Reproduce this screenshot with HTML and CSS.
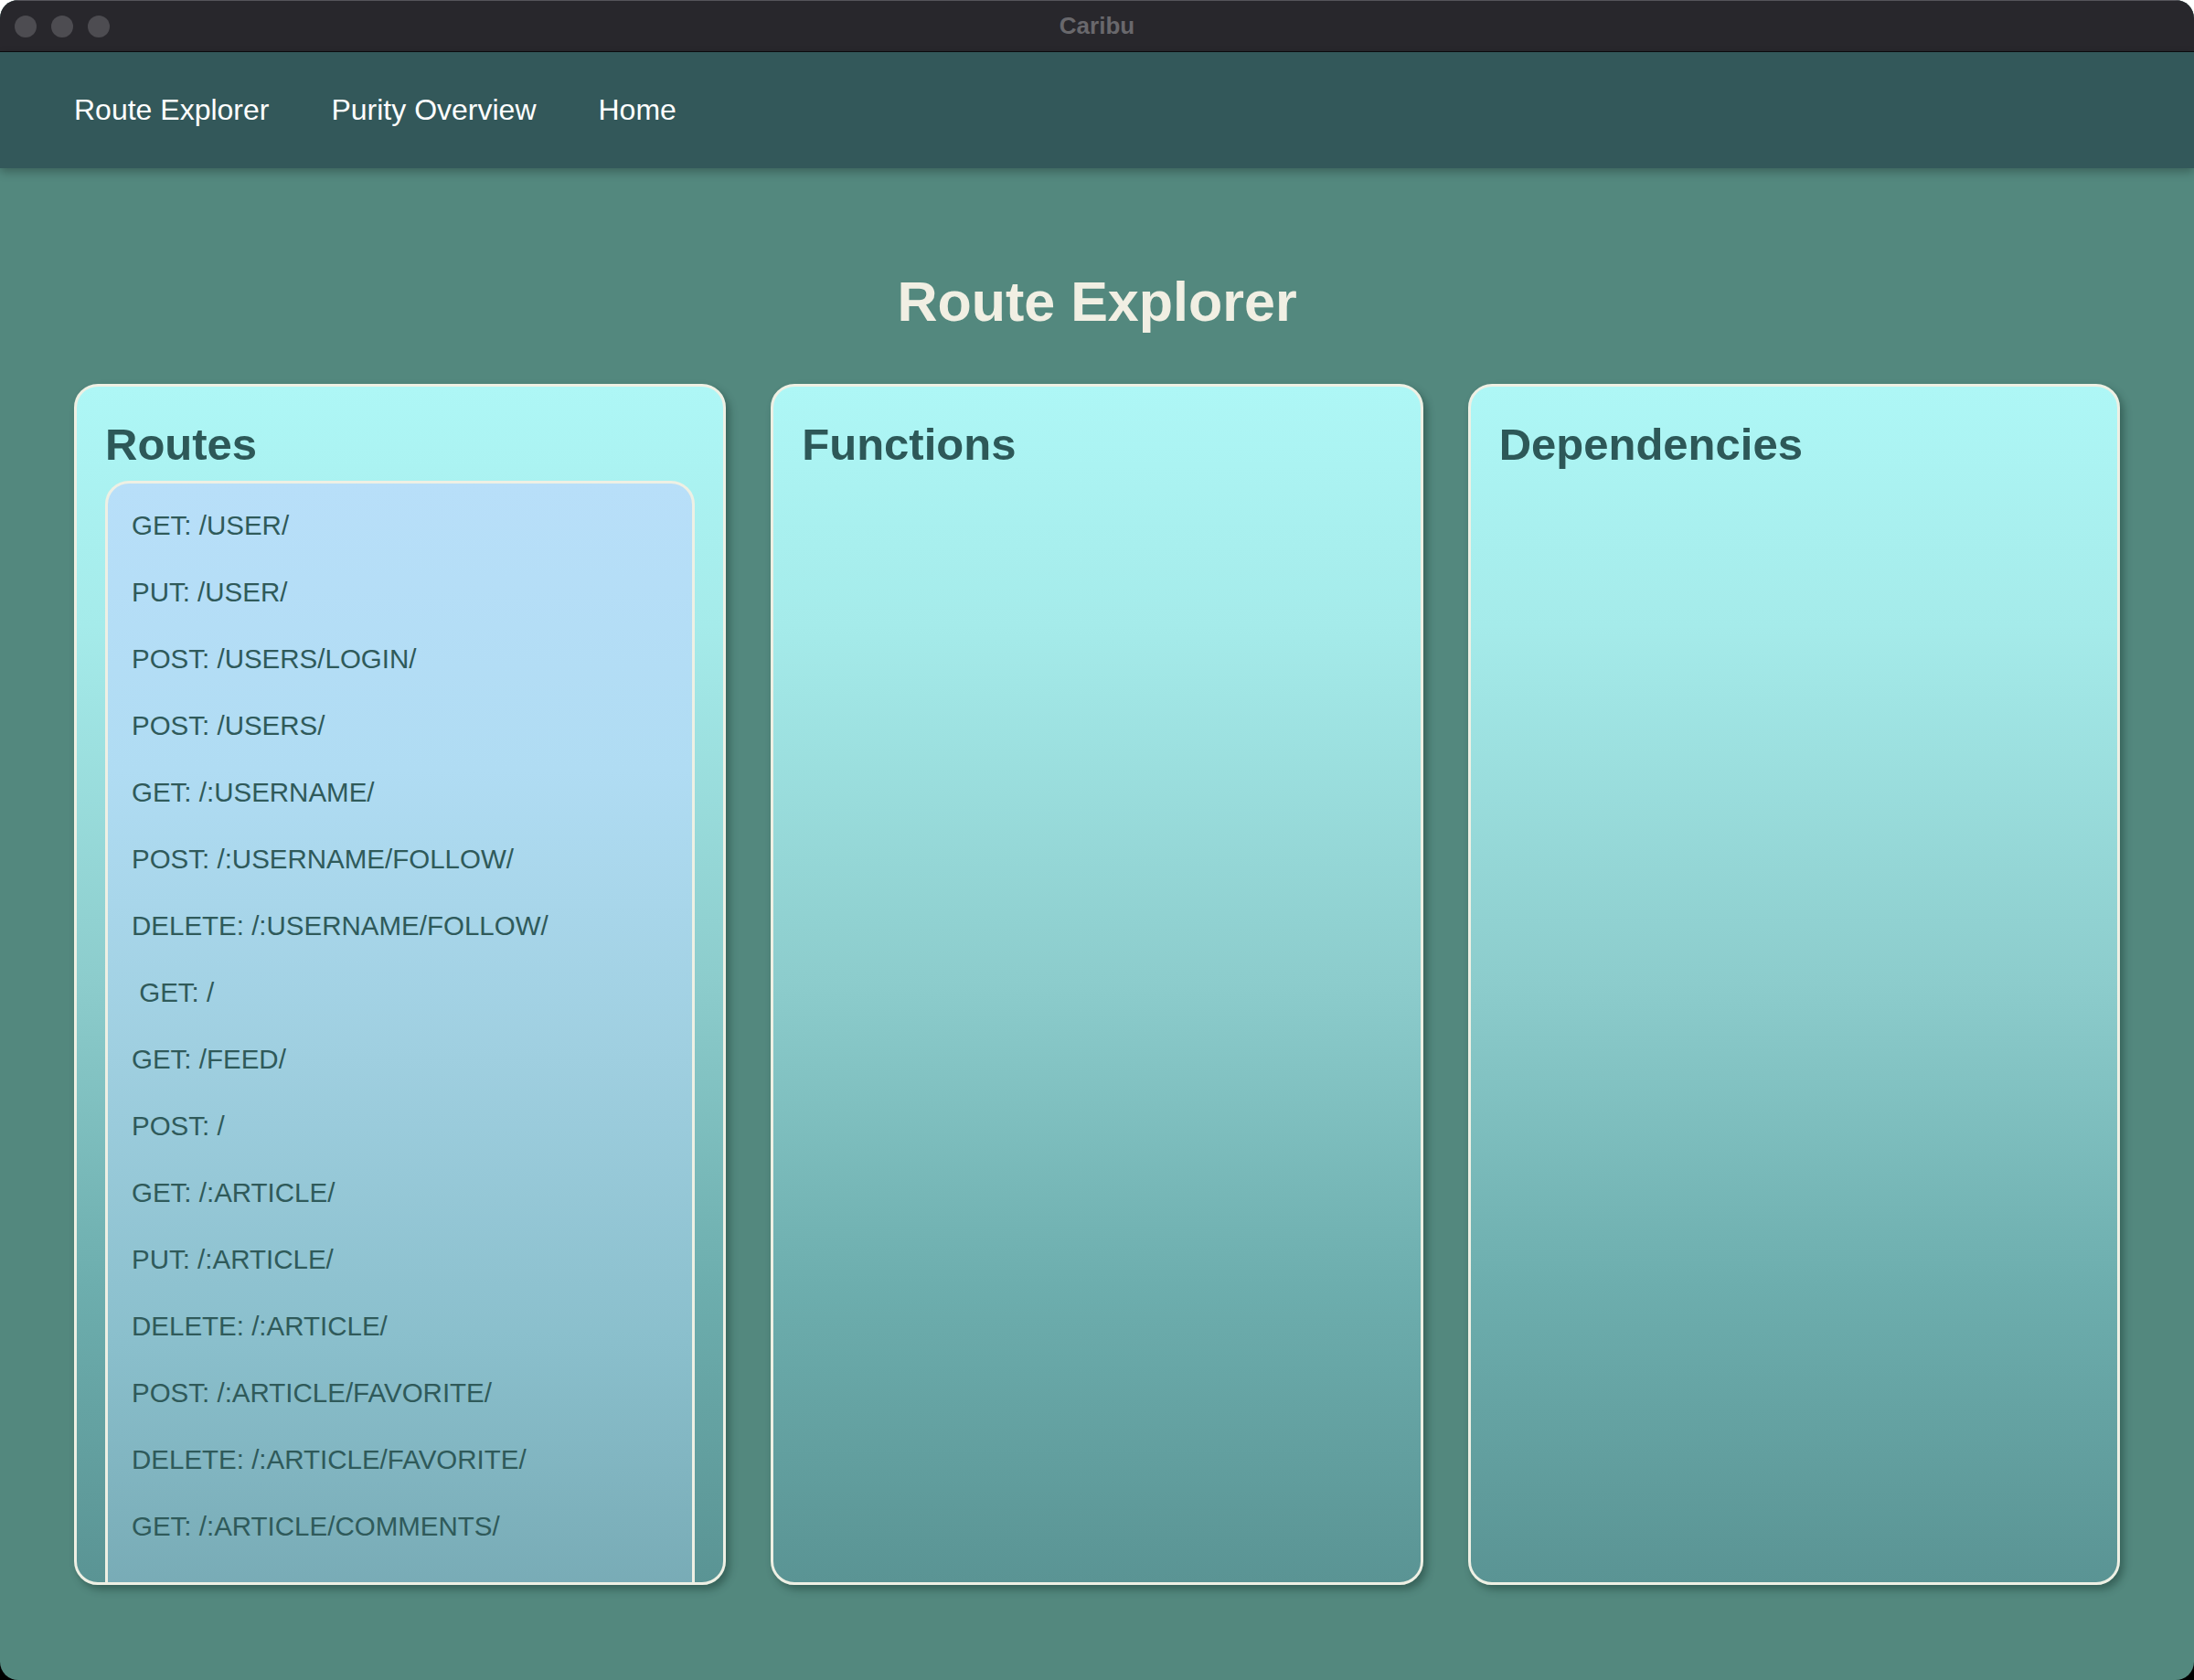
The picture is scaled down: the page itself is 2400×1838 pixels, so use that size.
FILE: index.html
```html
<!DOCTYPE html>
<html lang="en">
<head>
<meta charset="utf-8">
<title>Caribu</title>
<link rel="stylesheet" href="styles.css">
</head>
<body>
<div class="window">
  <header class="titlebar">
    <div class="lights">
      <span class="light"></span><span class="light"></span><span class="light"></span>
    </div>
    <div class="app-title">Caribu</div>
    <div></div>
  </header>
  <nav class="nav">
    <a class="nav-link" href="#">Route Explorer</a>
    <a class="nav-link" href="#">Purity Overview</a>
    <a class="nav-link" href="#">Home</a>
  </nav>
  <main class="main">
    <h1 class="page-title">Route Explorer</h1>
    <div class="cards">
      <section class="card">
        <h2 class="card-title">Routes</h2>
        <div class="route-list">
          <p class="route">GET: /user/</p>
          <p class="route">PUT: /user/</p>
          <p class="route">POST: /users/login/</p>
          <p class="route">POST: /users/</p>
          <p class="route">GET: /:username/</p>
          <p class="route">POST: /:username/follow/</p>
          <p class="route">DELETE: /:username/follow/</p>
          <p class="route"> GET: /</p>
          <p class="route">GET: /feed/</p>
          <p class="route">POST: /</p>
          <p class="route">GET: /:article/</p>
          <p class="route">PUT: /:article/</p>
          <p class="route">DELETE: /:article/</p>
          <p class="route">POST: /:article/favorite/</p>
          <p class="route">DELETE: /:article/favorite/</p>
          <p class="route">GET: /:article/comments/</p>
        </div>
      </section>
      <section class="card">
        <h2 class="card-title">Functions</h2>
      </section>
      <section class="card">
        <h2 class="card-title">Dependencies</h2>
      </section>
    </div>
  </main>
</div>
</body>
</html>
```

FILE: styles.css
```css
html, body {
  margin: 0;
  padding: 0;
}
body {
  width: 2400px;
  height: 1838px;
  background: linear-gradient(180deg, #ffffff 0%, #ffffff 50%, #000000 50%, #000000 100%);
  font-family: "Liberation Sans", Arial, sans-serif;
}
.window {
  width: 2400px;
  height: 1838px;
  border-radius: 20px;
  overflow: hidden;
  display: flex;
  flex-direction: column;
  background: #53887e;
}
.titlebar {
  box-sizing: border-box;
  height: 57px;
  flex: 0 0 57px;
  background: #28272c;
  border-top: 1px solid #55545a;
  border-bottom: 1px solid #0c0c0e;
  display: grid;
  grid-template-columns: 1fr auto 1fr;
  align-items: center;
}
.lights {
  display: flex;
  gap: 16px;
  padding-left: 16px;
}
.light {
  width: 24px;
  height: 24px;
  border-radius: 50%;
  background: #4d4c51;
}
.app-title {
  font-weight: bold;
  font-size: 26px;
  color: #69686c;
}
.nav {
  box-sizing: border-box;
  height: 127px;
  flex: 0 0 127px;
  background: #33585a;
  display: flex;
  align-items: center;
  gap: 68px;
  padding-left: 81px;
  box-shadow: 0 4px 10px rgba(0, 0, 0, 0.28);
  position: relative;
  z-index: 1;
}
.nav-link {
  color: #ffffff;
  text-decoration: none;
  font-size: 32px;
}
.main {
  flex: 1;
  display: flex;
  flex-direction: column;
  padding: 110px 81px 104px;
  min-height: 0;
}
.page-title {
  margin: 0 0 54px;
  text-align: center;
  font-size: 61px;
  line-height: 72px;
  font-weight: bold;
  color: #f1efe3;
}
.cards {
  flex: 1;
  display: grid;
  grid-template-columns: repeat(3, 1fr);
  gap: 49px;
  min-height: 0;
}
.card {
  box-sizing: border-box;
  border: 3px solid #eef0e4;
  border-radius: 26px;
  padding: 33px 31px 0;
  background: linear-gradient(180deg, #aef7f6 0%, #a5ebea 20%, #8ccccc 50%, #6daeae 75%, #5a9494 100%);
  box-shadow: 4px 5px 9px rgba(20, 50, 45, 0.45);
  overflow: hidden;
  display: flex;
  flex-direction: column;
  min-height: 0;
}
.card-title {
  margin: 0 0 10px;
  font-size: 49px;
  line-height: 60px;
  font-weight: bold;
  color: #2d5858;
}
.route-list {
  flex: 0 0 auto;
  height: 1260px;
  box-sizing: border-box;
  border: 3px solid #eef0e4;
  border-radius: 26px;
  padding: 9px 26px 0;
  background: linear-gradient(180deg, #b8dff9 0%, #b0dcf3 25%, #9fcfe0 50%, #8abfcc 75%, #75a8b2 100%);
}
.route {
  margin: 0;
  height: 73px;
  line-height: 73px;
  font-size: 29.5px;
  color: #2f5a5a;
  text-transform: uppercase;
  white-space: pre;
}
```
